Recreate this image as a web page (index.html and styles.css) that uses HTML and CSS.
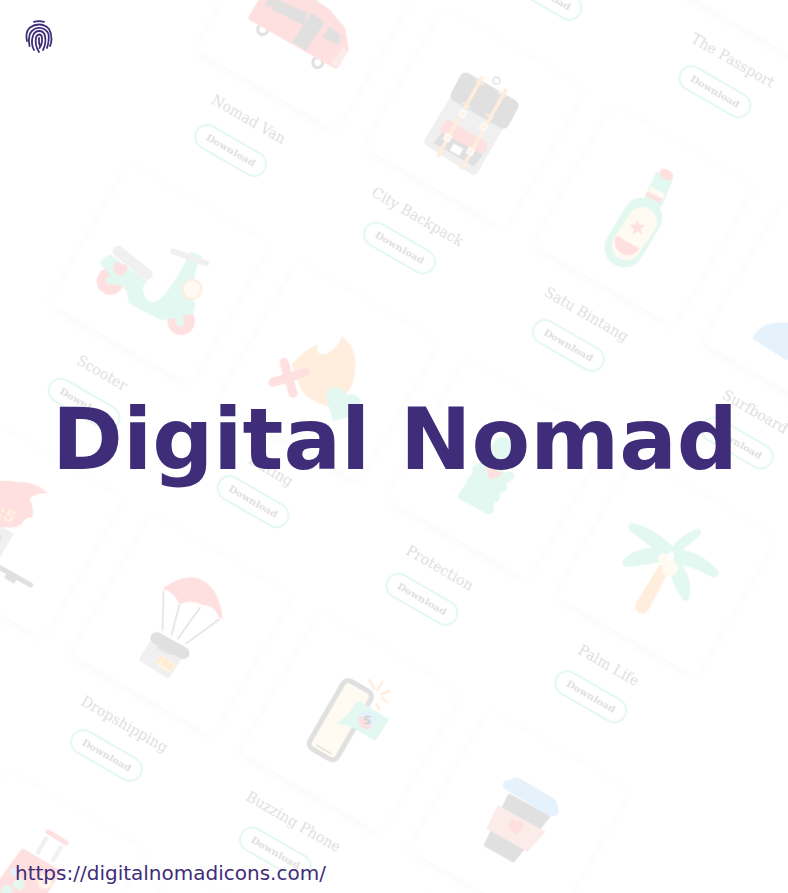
FILE: index.html
```html
<!DOCTYPE html>
<html lang="en">
<head>
<meta charset="utf-8">
<title>Digital Nomad</title>
<link rel="stylesheet" href="styles.css">
</head>
<body>
<div class="stage">
  <div class="catalog" aria-hidden="true">
    <div class="item item--empty"></div>
    <div class="item"><div class="card"></div><div class="name">Coworking Spot</div><div class="get">Download</div></div>
    <div class="item"><div class="card">
      <svg class="art" viewBox="0 0 160 160"><g transform="translate(80 80) rotate(-30) translate(-789 -38)">
        <path fill="#e5f1fb" d="M757 0L788 18V-8H757z"/>
      </g></svg>
    </div><div class="name">The Passport</div><div class="get">Download</div></div>
    <div class="item item--empty"></div>

    <div class="item"><div class="card">
      <svg class="art" viewBox="0 0 160 160"><g transform="translate(80 80) rotate(-30) translate(-305 -21)">
        <path fill="#e3f8f0" d="M300 -10L316 -5 322 15 328 16 343 25V32L300 8z"/>
        <circle cx="262" cy="30" r="5" fill="#fff" stroke="#e0e0e0" stroke-width="3"/>
        <circle cx="317" cy="63" r="5" fill="#fff" stroke="#e0e0e0" stroke-width="3"/>
        <path class="soft" fill="#ffe0e0" stroke="#ffe0e0" d="M251 18L274 -22 327 12 342 31 345 50 335 66z"/>
        <path fill="#fbebe9" d="M343 47L347 52 338 68 329 65z"/>
        <path class="soft2" fill="#e0e0e0" stroke="#e0e0e0" d="M276 1L305 14 302 24 273 9z"/>
        <path fill="#e0e0e0" d="M264 5L270 -3 275 0 271 8z"/>
        <path class="soft2" fill="#e0e0e0" stroke="#e0e0e0" d="M311 15L322 23 305 49 294 42z"/>
        <path class="soft2" fill="#e0e0e0" stroke="#e0e0e0" d="M329 29L338 36 337 44 324 37z"/>
      </g></svg>
    </div><div class="name">Nomad Van</div><div class="get">Download</div></div>
    <div class="item"><div class="card">
      <svg class="art" viewBox="0 0 160 160"><g transform="translate(80 80) rotate(-30) translate(-474 -118.500)">
        <path class="soft3" fill="#f0f0f0" stroke="#f0f0f0" d="M428 142L473 171 512 104 467 78z"/>
        <path class="soft2" fill="#e0e0e0" stroke="#e0e0e0" d="M435 143L473 165 484 150 447 128z"/>
        <path class="soft" fill="#ffe0e0" stroke="#ffe0e0" d="M447 123L484 145 481 151 443 130z"/>
        <path class="round" fill="#e0e0e0" stroke="#e0e0e0" d="M465 79L512 106 503 123 456 96z"/>
        <circle cx="496" cy="81" r="3.500" fill="none" stroke="#e0e0e0" stroke-width="1.500"/>
        <path fill="none" stroke="#ffeedd" stroke-width="3.500" d="M482 77L437 157M506 89L461 170"/>
        <path fill="none" stroke="#ffeedd" stroke-width="2" d="M475 80L483 85M462 103L470 108M497 92L505 97M485 114L493 119"/>
        <g fill="#fff3e6" stroke="#fff" stroke-width="1.200">
          <rect x="-3" y="-3" width="6" height="6" transform="translate(462 114) rotate(30)"/>
          <rect x="-3" y="-3" width="6" height="6" transform="translate(483 127) rotate(30)"/>
          <rect x="-3" y="-3" width="6" height="6" transform="translate(447 138) rotate(30)"/>
          <rect x="-3" y="-3" width="6" height="6" transform="translate(470 152) rotate(30)"/>
        </g>
        <rect x="-5.500" y="-4" width="11" height="8" fill="#fff" transform="translate(456 150) rotate(30)"/>
      </g></svg>
    </div><div class="name">City Backpack</div><div class="get">Download</div></div>
    <div class="item"><div class="card">
      <svg class="art" viewBox="0 0 160 160"><g transform="translate(80 80) rotate(-30) translate(-643 -216)">
        <path fill="#e3f8f0" d="M656 172L672 181 661 208 644 198z"/>
        <path fill="none" stroke="#e3f8f0" stroke-width="40" stroke-linecap="round" d="M642 218L624 248"/>
        <ellipse cx="0" cy="0" rx="7.500" ry="5" fill="#ffe0e0" transform="translate(666 175) rotate(30)"/>
        <path fill="#fffbf2" d="M651 187L664 194 661 203 645 195z"/>
        <path fill="#ffe0e0" d="M647 192L662 199 660 204 645 196z"/>
        <path fill="none" stroke="#fffbf2" stroke-width="29" stroke-linecap="round" d="M642 222L626 246"/>
        <path fill="#ffe0e0" d="M616 236L639 249A13 13 0 0 1 616 236z"/>
        <path fill="#ffe0e0" d="M637 220l2 5 6 .500-4.500 4 1.500 5.500-5-3-5 3 1.500-5.500-4.500-4 6-.500z"/>
      </g></svg>
    </div><div class="name">Satu Bintang</div><div class="get">Download</div></div>
    <div class="item"><div class="card">
      <svg class="art" viewBox="0 0 160 160"><g transform="translate(80 80) rotate(-30) translate(-812 -313.500)">
        <path fill="#e5f1fb" d="M752 339Q760 323 780 323H792V360H785z"/>
      </g></svg>
    </div><div class="name">Surfboard</div><div class="get">Download</div></div>

    <div class="item"><div class="card">
      <svg class="art" viewBox="0 0 160 160"><g transform="translate(80 80) rotate(-30) translate(-159 -275)">
        <circle cx="110" cy="282" r="13.500" fill="#ffe0e0"/>
        <circle cx="181" cy="322" r="13.700" fill="#ffe0e0"/>
        <path fill="#e3f8f0" d="M100 263Q103 258 110 255L147 282Q142 286 143 292 145 302 153 303 160 302 167 292 180 275 190 252L202 257Q196 266 195 275 191 288 190 298 196 302 195 307L193 315 162 321Q143 313 128 303L127 292Q123 287 118 285L102 267z"/>
        <path fill="none" stroke="#e3f8f0" stroke-width="7" stroke-linecap="round" d="M109 281L124 283"/>
        <path fill="none" stroke="#e3f8f0" stroke-width="8" stroke-linecap="round" d="M176 312L180 323"/>
        <path fill="none" stroke="#f0f0f0" stroke-width="11" stroke-linecap="round" d="M118 252L147 275"/>
        <path fill="none" stroke="#f0f0f0" stroke-width="6" stroke-linecap="round" d="M173 252L206 264"/>
        <path fill="#ffe0e0" d="M121 277L114 272Q112 264 117 263 120 263 121 266 126 263 127 268 128 272 124 274z"/>
        <circle cx="192" cy="290" r="9.500" fill="#fffbf2" stroke="#ffeedd" stroke-width="2"/>
      </g></svg>
    </div><div class="name">Scooter</div><div class="get">Download</div></div>
    <div class="item"><div class="card">
      <svg class="art" viewBox="0 0 160 160"><g transform="translate(80 80) rotate(-30) translate(-328 -372.500)">
        <path fill="#ffeedd" d="M342 337Q358 350 355 370 354 385 347 394 338 404 328 407 305 400 300 388L292 365Q305 350 317 345 316 354 322 355 334 355 342 337z"/>
        <path fill="none" stroke="#ffe0e0" stroke-width="9" stroke-linecap="round" d="M284 363L293 394M273 383L305 373"/>
        <path fill="#e3f8f0" d="M333 422L326 398Q327 388 336 388 343 388 346 396 354 392 360 400L362 414z"/>
      </g></svg>
    </div><div class="name">Dating</div><div class="get">Download</div></div>
    <div class="item"><div class="card">
      <svg class="art" viewBox="0 0 160 160"><g transform="translate(80 80) rotate(-30) translate(-497 -470)">
        <path fill="none" stroke="#e3f8f0" stroke-width="22" stroke-linecap="round" d="M503 449L492 470"/>
        <path class="soft" fill="#e3f8f0" stroke="#e3f8f0" d="M482 465L507 478 487 511 461 497z"/>
        <g fill="#e3f8f0"><circle cx="477" cy="470" r="5"/><circle cx="472" cy="482" r="5"/><circle cx="467" cy="493" r="5"/><circle cx="509" cy="477" r="5"/><circle cx="502" cy="488" r="5"/><circle cx="495" cy="498" r="5"/><circle cx="489" cy="510" r="5"/></g>
        <path fill="#ffe0e0" d="M486 467L503 473Q500 478 490 480z"/>
      </g></svg>
    </div><div class="name">Protection</div><div class="get">Download</div></div>
    <div class="item"><div class="card">
      <svg class="art" viewBox="0 0 160 160"><g transform="translate(80 80) rotate(-30) translate(-666 -567.500)">
        <path fill="#ffeedd" d="M660 565L670 570 649 610A6.500 6.500 0 0 1 636 604z"/>
        <g fill="#e3f8f0" stroke="#e3f8f0" stroke-width="3" stroke-linejoin="round">
          <path d="M673 549Q654 530 632 525 626 529 640 537 655 549 665 555z"/>
          <path d="M672 550Q684 535 699 531 702 534 692 541 680 550 677 556z"/>
          <path d="M675 551Q700 553 717 572 719 580 708 574 690 564 676 563z"/>
          <path d="M664 551Q640 547 625 561 622 567 632 566 650 563 664 561z"/>
          <path d="M676 560Q690 575 689 595 686 605 682 596 672 582 671 565z"/>
        </g>
        <circle cx="663" cy="559" r="5" fill="#fffbf2"/>
        <circle cx="670" cy="569" r="8" fill="#fffbf2"/>
      </g></svg>
    </div><div class="name">Palm Life</div><div class="get">Download</div></div>

    <div class="item"><div class="card">
      <svg class="art" viewBox="0 0 160 160"><g transform="translate(80 80) rotate(-30) translate(-13 -529)">
        <path fill="#ffe0e0" d="M-8 483Q8 480 17 483 35 482 48 494 35 494 30 500 34 506 33 518 25 518 22 525 15 530 5 528L-8 530z"/>
        <text class="deal" x="0" y="0" transform="translate(12 525) rotate(30)">2:5</text>
        <path class="soft2" fill="#f0f0f0" stroke="#f0f0f0" d="M-8 524L12 535 -8 570z"/>
        <path fill="#e0e0e0" d="M-8 540L2 536 0 545 -8 550z"/>
        <path fill="none" stroke="#e0e0e0" stroke-width="5" stroke-linecap="round" d="M-6 565L31 586"/>
        <path fill="none" stroke="#e0e0e0" stroke-width="6" d="M6 576L16 582"/>
      </g></svg>
    </div></div>
    <div class="item"><div class="card">
      <svg class="art" viewBox="0 0 160 160"><g transform="translate(80 80) rotate(-30) translate(-182 -626.500)">
        <path fill="#ffe0e0" d="M163 590Q180 576 198 579 220 587 223 620L219 618Q215 606 203 606 192 600 180 605 174 592 163 590z"/>
        <path fill="none" stroke="#e0e0e0" stroke-width="1.500" d="M164 592L163 632M180 605L172 636M201 608L178 640M220 620L186 645"/>
        <path class="soft" fill="#f0f0f0" stroke="#f0f0f0" d="M143 660L168 676 184 652 157 637z"/>
        <path fill="none" stroke="#e0e0e0" stroke-width="12" stroke-linecap="round" d="M157 639L184 654"/>
        <path fill="none" stroke="#e0e0e0" stroke-width="2" d="M158 648L173 656"/>
        <g transform="translate(166 665) rotate(30)">
          <rect x="-9" y="-5.500" width="18" height="11" rx="1" fill="#fff4e4"/>
          <text class="fba" x="0" y="3">FBA</text>
        </g>
      </g></svg>
    </div><div class="name">Dropshipping</div><div class="get">Download</div></div>
    <div class="item"><div class="card">
      <svg class="art" viewBox="0 0 160 160"><g transform="translate(80 80) rotate(-30) translate(-351 -724)">
        <rect x="-16" y="-39" width="32" height="78" rx="6" fill="#fffbf2" stroke="#e0e0e0" stroke-width="5" transform="translate(341 721) rotate(30)"/>
        <path fill="none" stroke="#e0e0e0" stroke-width="3" d="M354 684L369 693"/>
        <path fill="none" stroke="#e0e0e0" stroke-width="1.500" d="M317 746L332 755"/>
        <path fill="#e3f8f0" d="M350 714L337 725 352 727z"/>
        <path class="soft" fill="#e3f8f0" stroke="#e3f8f0" d="M359 705L386 721 375 738 348 722z"/>
        <circle cx="368" cy="721" r="9" fill="#e5f1fb"/>
        <path fill="#ffe0e0" d="M360 717A9 9 0 0 0 372 729L368 721z"/>
        <text class="coin" x="368" y="725">S</text>
        <path fill="none" stroke="#ffeedd" stroke-width="2.500" stroke-linecap="round" d="M370 681L375 690M383 683L378 691M390 692L382 695M388 703L382 699M380 710L377 705"/>
      </g></svg>
    </div><div class="name">Buzzing Phone</div><div class="get">Download</div></div>
    <div class="item"><div class="card">
      <svg class="art" viewBox="0 0 160 160"><g transform="translate(80 80) rotate(-30) translate(-520 -821.500)">
        <path class="soft2" fill="#e0e0e0" stroke="#e0e0e0" d="M510 796L549 818 514 862 486 846z"/>
        <path class="soft2" fill="#fbebe9" stroke="#fbebe9" d="M499 808L544 833 528 851 489 829z"/>
        <path fill="#ffe0e0" d="M516 836L510 829Q508 823 512 821 515 820 517 823 520 821 523 823 526 826 523 829z"/>
        <path class="soft3" fill="#e5f1fb" stroke="#e5f1fb" d="M508 786L518 783 553 804 555 812 552 813z"/>
      </g></svg>
    </div><div class="name">Daily Coffee</div><div class="get">Download</div></div>

    <div class="item item--empty"></div>
    <div class="item"><div class="card">
      <svg class="art" viewBox="0 0 160 160"><g transform="translate(80 80) rotate(-30) translate(-36 -880.500)">
        <path fill="none" stroke="#f0f0f0" stroke-width="4" d="M48 838L38 855M63 847L53 863"/>
        <path fill="none" stroke="#ffe0e0" stroke-width="5" stroke-linecap="round" d="M49 833L67 844"/>
        <path class="soft" fill="#ffe0e0" stroke="#ffe0e0" d="M24 853L58 873 30 920 -10 900z"/>
        <circle cx="46" cy="883" r="7" fill="#fffbf2" stroke="#ffeedd" stroke-width="2"/>
        <circle cx="46" cy="883" r="3" fill="#ffe0e0"/>
        <rect x="-5" y="-5" width="10" height="10" rx="1.500" fill="#e3f8f0" transform="translate(20 885) rotate(30)"/>
        <rect x="-5" y="-5" width="10" height="10" rx="1.500" fill="#e3f8f0" transform="translate(8 892) rotate(30)"/>
        <circle cx="15" cy="873" r="4" fill="#e5f1fb"/>
      </g></svg>
    </div></div>
    <div class="item"><div class="card"></div></div>
  </div>

  <header class="top">
    <svg class="mark" viewBox="0 0 28 34" fill="none" stroke="#3f2d7a" stroke-width="1.800" stroke-linecap="round">
      <path d="M9 1.800Q14 .5 19 1.800"/>
      <path d="M2 21Q0 12 5 7.500 9 4.500 14 4.500 20 4.500 24 9 26.500 13 26.500 19 26.500 23 25 26"/>
      <path d="M4.500 26Q3 20 4.800 14 8 7.800 14 7.800 21 7.800 23.500 14 24.500 20 22 28"/>
      <path d="M9 30Q5.500 24 8 15.500 10 11 14 11 19 11 20 16 21.500 23 18 30"/>
      <path d="M14 32Q9.500 25 11 17.500 12 14.500 14.500 14.500 17 15 17 18 17.500 24 14.500 28"/>
      <path d="M14 18Q13.500 23 15 26"/>
    </svg>
  </header>
  <main class="hero"><h1 class="title">Digital Nomad</h1></main>
  <footer class="bottom">https://digitalnomadicons.com/</footer>
</div>
</body>
</html>
```
FILE: styles.css
```css
* { box-sizing: border-box; }
html, body { margin: 0; padding: 0; background: #fff; }
.stage {
  position: relative;
  width: 788px;
  height: 893px;
  overflow: hidden;
  display: flex;
  flex-direction: column;
  color: #3f2d7a;
  font-family: "DejaVu Sans", sans-serif;
}
.catalog {
  position: absolute;
  left: 0;
  top: 0;
  display: grid;
  grid-template-columns: repeat(4, 160px);
  grid-auto-rows: 293px;
  column-gap: 35px;
  transform-origin: 0 0;
  transform: rotate(30deg) translate(195px, -508px);
  filter: blur(.35px);
}
.item { display: flex; flex-direction: column; align-items: center; }
.card {
  width: 160px;
  height: 160px;
  flex: none;
  background: #fff;
  box-shadow: 0 2px 12px rgba(0, 0, 0, .028);
}
.art { display: block; width: 160px; height: 160px; overflow: visible; }
.soft { stroke-width: 6; stroke-linejoin: round; }
.soft2 { stroke-width: 3; stroke-linejoin: round; }
.soft3 { stroke-width: 9; stroke-linejoin: round; }
.round { stroke-width: 12; stroke-linejoin: round; }
.fba { font: bold 8px "DejaVu Sans", sans-serif; fill: #ffe9c9; text-anchor: middle; }
.deal { font: bold 16px "DejaVu Sans", sans-serif; fill: #fff3df; text-anchor: end; }
.coin { font: bold 11px "DejaVu Sans", sans-serif; fill: #cfcfcf; text-anchor: middle; }
.name {
  margin-top: 22px;
  height: 24px;
  line-height: 24px;
  font-family: "DejaVu Serif", serif;
  font-size: 14.2px;
  color: #dedcdc;
  white-space: nowrap;
}
.get {
  margin-top: 11px;
  width: 80px;
  height: 26px;
  line-height: 22px;
  border: 2px solid #e3f8f0;
  border-radius: 13px;
  text-align: center;
  font-family: "DejaVu Serif", serif;
  font-weight: 700;
  font-size: 10px;
  color: #dedcdc;
}
.top, .hero, .bottom { position: relative; }
.top { padding: 20px 0 0 25px; height: 62px; flex: none; }
.mark { display: block; width: 28px; height: 34px; }
.hero { flex: 1; display: flex; align-items: center; justify-content: center; padding: 0 0 42px 2px; }
.title { margin: 0; font-size: 85.4px; line-height: 100px; font-weight: 700; white-space: nowrap; }
.bottom { flex: none; padding: 0 0 7px 15px; font-size: 20px; line-height: 26px; }
```
